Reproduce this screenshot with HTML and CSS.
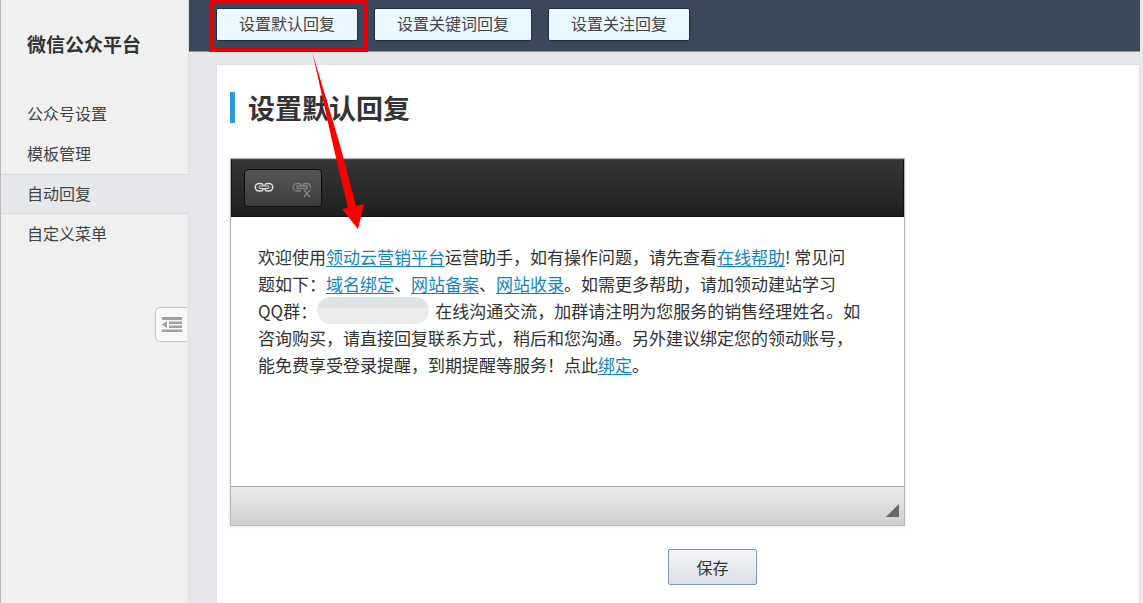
FILE: index.html
```html
<!DOCTYPE html>
<html lang="zh-CN">
<head>
<meta charset="utf-8">
<title>设置默认回复</title>
<link rel="stylesheet" href="styles.css">
</head>
<body>
<div class="app">
  <aside class="sidebar">
    <h2 class="sidebar-title">微信公众平台</h2>
    <nav class="menu">
      <a class="menu-item" href="#account">公众号设置</a>
      <a class="menu-item" href="#template">模板管理</a>
      <a class="menu-item active" href="#reply">自动回复</a>
      <a class="menu-item" href="#menu">自定义菜单</a>
    </nav>
    <button class="collapse" type="button" aria-label="收起菜单">
      <svg width="20" height="16" viewBox="0 0 20 16" fill="#a0a0a0">
        <path d="M0 0h20v3H0zM7 4.500h13v2.500H7zM7 8.500h13v2.500H7zM0 12.500h20v2.500H0zM0 7.500l5-3.500v7z"/>
      </svg>
    </button>
  </aside>
  <div class="main">
    <header class="tabs">
      <button class="tab" type="button">设置默认回复</button>
      <button class="tab" type="button">设置关键词回复</button>
      <button class="tab" type="button">设置关注回复</button>
    </header>
    <main class="panel">
      <h1 class="title">设置默认回复</h1>
      <form class="form">
        <div class="editor">
          <div class="toolbar">
            <div class="tool-group">
              <button class="tool" type="button" aria-label="插入链接">
                <svg width="20" height="12" viewBox="0 0 20 12" fill="none" stroke="#dedede" stroke-width="1.500">
                  <path d="M9 3.500C9 2 8 1.500 6.500 1.500H5A3.700 3.700 0 0 0 5 9H6.500C8 9 9 8.500 9 7M11 3.500C11 2 12 1.500 13.500 1.500H15A3.700 3.700 0 0 1 15 9H13.500C12 9 11 8.500 11 7"/>
                  <rect x="5" y="4" width="10" height="2.500" rx="1" stroke-width="1"/>
                </svg>
              </button>
              <button class="tool" type="button" aria-label="取消链接" disabled>
                <svg width="20" height="16" viewBox="0 0 20 16" fill="none" stroke="#818181" stroke-width="1.300">
                  <path d="M9 3.500C9 2 8 1.500 6.500 1.500H5A3.700 3.700 0 0 0 5 9H9M11 3.500C11 2 12 1.500 13.500 1.500H15Q18.500 2 18.500 6M5 4h10v2.500H5z"/>
                  <path d="M12 8l6 7M18 8l-6 7" stroke-width="1.600"/>
                </svg>
              </button>
            </div>
          </div>
          <div class="content" contenteditable="true" role="textbox" aria-label="回复内容">欢迎使用<a href="#platform">领动云营销平台</a>运营助手，如有操作问题，请先查看<a href="#help">在线帮助</a>! 常见问<br>题如下：<a href="#domain">域名绑定</a>、<a href="#record">网站备案</a>、<a href="#index">网站收录</a>。如需更多帮助，请加领动建站学习<br>QQ群：<span class="redacted"></span>在线沟通交流，加群请注明为您服务的销售经理姓名。如<br>咨询购买，请直接回复联系方式，稍后和您沟通。另外建议绑定您的领动账号，<br>能免费享受登录提醒，到期提醒等服务！点此<a href="#bind">绑定</a>。</div>
          <div class="statusbar">
            <svg width="13" height="13" viewBox="0 0 13 13"><path d="M13 0v13H0z" fill="#666"/></svg>
          </div>
        </div>
        <button class="save" type="button">保存</button>
      </form>
    </main>
  </div>
  <svg class="callout" width="380" height="240" viewBox="0 0 380 240">
    <rect x="211" y="1" width="155" height="49" fill="none" stroke="#e60005" stroke-width="4"/>
    <path d="M312.500 53L340 145L356 206L364 204L358 229L342 209L348 208L333 145z" fill="#fb0000"/>
  </svg>
</div>
</body>
</html>
```
FILE: styles.css
```css
* {
  box-sizing: border-box;
}

body {
  margin: 0;
  background: #e6e8ec;
  color: #333;
  font-family: "Noto Sans CJK SC", sans-serif;
  font-size: 16px;
}

button {
  font: inherit;
  color: inherit;
  padding: 0;
  cursor: pointer;
}

.app {
  position: relative;
  display: flex;
  min-height: 100vh;
  border-left: 1px solid #b8babf;
}

.sidebar {
  display: flex;
  flex-direction: column;
  flex: 0 0 188px;
  border-right: 1px solid #dcdee2;
  background: #f0f0f0;
}

.sidebar-title {
  margin: 0;
  padding: 30px 26px 0;
  font-size: 19px;
  line-height: 28px;
}

.menu {
  display: flex;
  flex-direction: column;
  padding-top: 36px;
}

.menu-item {
  height: 40px;
  padding-left: 26px;
  border: solid transparent;
  border-width: 1px 0;
  color: #444;
  line-height: 36px;
  text-decoration: none;
}

.menu-item.active {
  margin-right: -1px;
  border-color: #d9dbdf;
  background: #e6e8ec;
}

.collapse {
  display: flex;
  align-items: center;
  justify-content: center;
  align-self: flex-end;
  width: 32px;
  height: 35px;
  margin: 53px 1px 0 0;
  border: 1px solid #c4c4c4;
  border-right: 0;
  border-radius: 5px 0 0 5px;
  background: #f8f8f8;
}

.main {
  display: flex;
  flex: 1;
  flex-direction: column;
  min-width: 0;
  margin-right: 3px;
}

.tabs {
  display: flex;
  gap: 16px;
  height: 52px;
  padding: 8px 27px 0;
  border-bottom: 1px solid #8b95a3;
  background: #3b475a;
}

.tab {
  height: 33px;
  padding: 0 22px 3px;
  border: 1px solid #1f3040;
  border-radius: 2px;
  background: #ebf8ff;
  color: #444;
  line-height: 28px;
}

.panel {
  flex: 1;
  margin: 12px 0 0 27px;
  padding: 27px 13px 18px;
  border: 1px solid #dfe0e3;
  border-bottom: 0;
  background: #fff;
}

.title {
  margin: 0;
  padding: 1px 0 0 13px;
  border-left: 5px solid #289ad9;
  font-size: 27px;
  line-height: 30px;
}

.form {
  display: flex;
  flex-direction: column;
  align-items: flex-start;
}

.editor {
  width: 100%;
  max-width: 675px;
  margin-top: 35px;
  border: 1px solid #b6b6b6;
  box-shadow: 0 0 3px #ddd;
}

.toolbar {
  padding: 9px 12px;
  border: 1px solid #111;
  border-top-color: #484848;
  background: linear-gradient(#363636, #1f1f1f);
}

.tool-group {
  display: inline-flex;
  vertical-align: top;
  width: 78px;
  height: 38px;
  border: 1px solid #0c0c0c;
  border-radius: 4px;
  background: linear-gradient(#555, #3d3d3d);
}

.tool {
  display: flex;
  flex: 1;
  align-items: flex-start;
  justify-content: center;
  padding-top: 12px;
  border: 0;
  background: none;
}

.content {
  min-height: 269px;
  padding: 26px 27px;
  outline: none;
  font-size: 17px;
  line-height: 27px;
  white-space: nowrap;
}

.content a {
  color: #1684c2;
  text-underline-offset: 2px;
}

.redacted {
  display: inline-block;
  width: 112px;
  height: 27px;
  margin-right: 6px;
  border-radius: 14px;
  background: linear-gradient(#dfe4e7 40%, #ececec 40%);
  vertical-align: top;
}

.statusbar {
  display: flex;
  align-items: center;
  justify-content: flex-end;
  height: 39px;
  padding: 8px 5px 0;
  border-top: 1px solid #aaa;
  background: linear-gradient(#ebebeb, #cfcfcf);
}

.save {
  width: 89px;
  height: 36px;
  margin: 23px 0 0 438px;
  border: 1px solid #7b9ab3;
  border-radius: 2px;
  background: linear-gradient(#f4f6fa, #dcdfe3);
}

.callout {
  position: absolute;
  top: 0;
  left: -1px;
  pointer-events: none;
}
```
